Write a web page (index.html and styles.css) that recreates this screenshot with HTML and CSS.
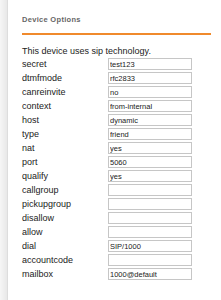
FILE: index.html
```html
<!DOCTYPE html>
<html lang="en">
<head>
    <meta charset="UTF-8">
    <title>Device Options</title>
    <link rel="stylesheet" href="styles.css">
</head>
<body>
    <div class="page">
        <!-- barra lateral -->
        <div class="side"></div>

        <div class="content">
            <div class="title">Device Options</div>
            <p class="intro">This device uses sip technology.</p>

            <div class="options">
                <label>secret</label><input type="text" value="test123">
                <label>dtmfmode</label><input type="text" value="rfc2833">
                <label>canreinvite</label><input type="text" value="no">
                <label>context</label><input type="text" value="from-internal">
                <label>host</label><input type="text" value="dynamic">
                <label>type</label><input type="text" value="friend">
                <label>nat</label><input type="text" value="yes">
                <label>port</label><input type="text" value="5060">
                <label>qualify</label><input type="text" value="yes">
                <label>callgroup</label><input type="text" value="">
                <label>pickupgroup</label><input type="text" value="">
                <label>disallow</label><input type="text" value="">
                <label>allow</label><input type="text" value="">
                <label>dial</label><input type="text" value="SIP/1000">
                <label>accountcode</label><input type="text" value="">
                <label>mailbox</label><input type="text" value="1000@default">
            </div>
        </div>
    </div>
</body>
</html>
```

FILE: styles.css
```css
body {
    margin: 0;
    background-color: #fff;
    font-family: "Liberation Sans", Arial, sans-serif;
    color: #222;
}

.page {
    display: flex;
    min-height: 300px;
}

.side {
    width: 7px;
    background: linear-gradient(to right, #f6f6f6, #e8e8e8);
    border-right: 1px solid #dddddd;
}

.content {
    flex: 1;
    padding: 15px 10px 0 14px;
}

.title {
    font-size: 7.5px;
    line-height: 9px;
    font-weight: bold;
    color: #666;
    letter-spacing: 0.3px;
    padding-bottom: 9px;
    border-bottom: 2px solid #f08a2c;
    border-image: linear-gradient(#c8ad94 50%, #f08a2c 50%) 1;
}

.intro {
    font-size: 9px;
    line-height: 11px;
    margin: 11px 0 1px 0;
}

.options {
    display: grid;
    grid-template-columns: 86px 84px;
    row-gap: 2px;
    align-items: center;
}

.options label {
    font-size: 9px;
    line-height: 12px;
}

.options input {
    box-sizing: border-box;
    height: 12px;
    width: 84px;
    margin: 0;
    padding: 0 1px;
    border: 1px solid #c6c6c6;
    font-family: "Liberation Sans", Arial, sans-serif;
    font-size: 7.5px;
    color: #222;
    background-color: #fff;
    outline: none;
}
```
